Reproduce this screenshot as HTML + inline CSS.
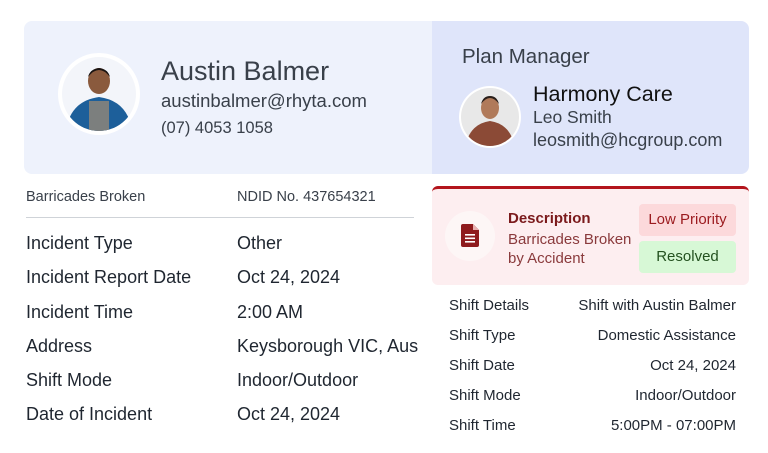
<!DOCTYPE html><html><head><style>
body{margin:0;width:768px;height:453px;background:#fff;font-family:"Liberation Sans",sans-serif;color:#1f2630;position:relative;overflow:hidden}
.a{position:absolute;white-space:nowrap}
</style></head><body>
<div class="a" style="left:24px;top:21px;width:420px;height:153px;background:#eef2fc;border-radius:8px"></div>
<div class="a" style="left:432px;top:21px;width:317px;height:153px;background:#dfe5fa;border-radius:0 8px 8px 0"></div>
<div class="a" style="left:58px;top:53px;width:82px;height:82px;border-radius:50%;background:#fff;"></div>
<svg class="a" style="left:62px;top:57px" width="74" height="74" viewBox="0 0 74 74"><defs><clipPath id="c"><circle cx="37" cy="37" r="37"/></clipPath></defs><g clip-path="url(#c)"><rect width="74" height="74" fill="#f3f5fa"/><path d="M4 74 Q8 44 37 40 Q66 44 70 74Z" fill="#1d5f9a"/><rect x="27" y="44" width="20" height="30" fill="#7c7f7e"/><ellipse cx="37" cy="24" rx="11" ry="13" fill="#8a5a3d"/><path d="M26 20 Q37 6 48 20 Q46 12 37 11 Q28 12 26 20Z" fill="#1a1412"/></g></svg>
<div class="a" style="left:161px;top:56px;font-size:27px;color:#39404a">Austin Balmer</div>
<div class="a" style="left:161px;top:90px;font-size:18.5px;color:#39404a">austinbalmer@rhyta.com</div>
<div class="a" style="left:161px;top:119px;font-size:16.5px;color:#39404a">(07) 4053 1058</div>
<div class="a" style="left:462px;top:45px;font-size:20.5px;color:#39404a">Plan Manager</div>
<svg class="a" style="left:459px;top:86px" width="62" height="62" viewBox="0 0 62 62"><defs><clipPath id="d"><circle cx="31" cy="31" r="29"/></clipPath></defs><circle cx="31" cy="31" r="31" fill="#fff"/><g clip-path="url(#d)"><rect width="62" height="62" fill="#e8e8e8"/><path d="M6 62 Q10 38 31 35 Q52 38 56 62Z" fill="#8b4a36"/><ellipse cx="31" cy="22" rx="9" ry="11" fill="#b07a5a"/><path d="M22 18 Q31 6 40 18 Q38 10 31 10 Q24 10 22 18Z" fill="#2a1f1a"/></g></svg>
<div class="a" style="left:533px;top:82px;font-size:21.5px;color:#111">Harmony Care</div>
<div class="a" style="left:533px;top:107px;font-size:17.5px;color:#39404a">Leo Smith</div>
<div class="a" style="left:533px;top:130px;font-size:18px;color:#39404a">leosmith@hcgroup.com</div>

<div class="a" style="left:26px;top:189px;font-size:14.5px;color:#39404a">Barricades Broken</div>
<div class="a" style="left:237px;top:189px;font-size:14.5px;color:#39404a">NDID No. 437654321</div>
<div class="a" style="left:26px;top:217px;width:388px;height:1px;background:#cfd3d8"></div>
<div class="a" style="left:26px;top:226px;font-size:18px;line-height:34.3px">Incident Type<br>Incident Report Date<br>Incident Time<br>Address<br>Shift Mode<br>Date of Incident</div>
<div class="a" style="left:237px;top:226px;font-size:18px;line-height:34.3px">Other<br>Oct 24, 2024<br>2:00 AM<br>Keysborough VIC, Aus<br>Indoor/Outdoor<br>Oct 24, 2024</div>

<div class="a" style="left:432px;top:186px;width:317px;height:99px;background:#fdeef0;border-top:3px solid #b3141c;border-radius:6px;box-sizing:border-box"></div>
<div class="a" style="left:445px;top:211px;width:50px;height:50px;border-radius:50%;background:#fdf6f6"></div>
<svg class="a" style="left:461px;top:224px" width="18" height="23" viewBox="0 0 18 23"><path d="M2 0H12L18 6V21Q18 23 16 23H2Q0 23 0 21V2Q0 0 2 0Z" fill="#8e1a1d"/><path d="M12 0V6H18" fill="#e8b0b0"/><rect x="4" y="10" width="10" height="1.6" fill="#fff"/><rect x="4" y="13.5" width="10" height="1.6" fill="#fff"/><rect x="4" y="17" width="10" height="1.6" fill="#fff"/></svg>
<div class="a" style="left:508px;top:210px;font-size:15px;font-weight:bold;color:#7b1a1c">Description</div>
<div class="a" style="left:508px;top:230px;font-size:15px;line-height:19px;color:#8a3a3c">Barricades Broken<br>by Accident</div>
<div class="a" style="left:639px;top:204px;width:97px;height:32px;background:#fcd9db;border-radius:4px;color:#9b1a1e;font-size:15px;text-align:center;line-height:32px">Low Priority</div>
<div class="a" style="left:639px;top:241px;width:97px;height:32px;background:#d7f8d6;border-radius:4px;color:#23511f;font-size:15px;text-align:center;line-height:32px">Resolved</div>

<div class="a" style="left:449px;top:291px;font-size:15px;line-height:30px">Shift Details<br>Shift Type<br>Shift Date<br>Shift Mode<br>Shift Time</div>
<div class="a" style="right:32px;top:291px;font-size:15px;line-height:30px;text-align:right">Shift with Austin Balmer<br>Domestic Assistance<br>Oct 24, 2024<br>Indoor/Outdoor<br>5:00PM - 07:00PM</div>
</body></html>
